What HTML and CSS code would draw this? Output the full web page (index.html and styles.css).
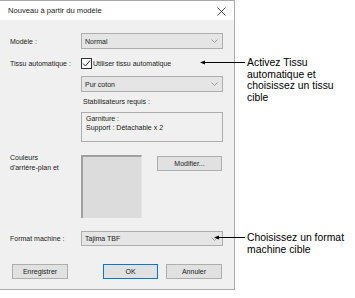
FILE: index.html
```html
<!DOCTYPE html>
<html lang="fr">
<head>
    <meta charset="UTF-8">
    <meta name="viewport" content="width=device-width, initial-scale=1.0">
    <title>Nouveau à partir du modèle</title>
    <link rel="stylesheet" href="styles.css">
</head>
<body>
    <div class="page">
        <div class="dialog">
            <div class="titlebar">
                <span class="title">Nouveau à partir du modèle</span>
                <svg class="close" width="9" height="9" viewBox="0 0 9 9">
                    <path d="M0.5 0.5 L8.5 8.5 M8.5 0.5 L0.5 8.5" stroke="#333" stroke-width="0.9" fill="none"/>
                </svg>
            </div>

            <div class="content">
                <div class="row row-model">
                    <div class="lbl">Modèle :</div>
                    <div class="select">
                        <span>Normal</span>
                        <svg class="chev" width="7" height="4" viewBox="0 0 7 4"><path d="M0.5 0.5 L3.5 3.5 L6.5 0.5" stroke="#999" fill="none"/></svg>
                    </div>
                </div>

                <div class="row row-tissu">
                    <div class="lbl">Tissu automatique :</div>
                    <div class="check">
                        <span class="box">
                            <svg width="9" height="9" viewBox="0 0 9 9"><path d="M1 4.5 L3.5 7 L8 1.5" stroke="#222" stroke-width="1" fill="none"/></svg>
                        </span>
                        <span>Utiliser tissu automatique</span>
                    </div>
                </div>

                <div class="row row-fabric">
                    <div class="lbl"></div>
                    <div class="select">
                        <span>Pur coton</span>
                        <svg class="chev" width="7" height="4" viewBox="0 0 7 4"><path d="M0.5 0.5 L3.5 3.5 L6.5 0.5" stroke="#999" fill="none"/></svg>
                    </div>
                </div>

                <div class="row row-stab">
                    <div class="lbl"></div>
                    <div class="stab">
                        <div class="stab-title">Stabilisateurs requis :</div>
                        <div class="stab-box">
                            <div>Garniture :</div>
                            <div>Support : Détachable x 2</div>
                        </div>
                    </div>
                </div>

                <div class="row row-colors">
                    <div class="lbl lbl-wrap">Couleurs<br>d'arrière-plan et</div>
                    <div class="colors">
                        <div class="swatch"></div>
                        <div class="btn btn-modify">Modifier...</div>
                    </div>
                </div>

                <div class="row row-format">
                    <div class="lbl">Format machine :</div>
                    <div class="select">
                        <span>Tajima TBF</span>
                        <svg class="chev" width="7" height="4" viewBox="0 0 7 4"><path d="M0.5 0.5 L3.5 3.5 L6.5 0.5" stroke="#999" fill="none"/></svg>
                    </div>
                </div>

                <div class="actions">
                    <div class="btn btn-save">Enregistrer</div>
                    <div class="btn btn-ok">OK</div>
                    <div class="btn btn-cancel">Annuler</div>
                </div>
            </div>
        </div>

        <!-- callouts -->
        <div class="callout callout-tissu">
            <svg class="pointer" width="47" height="7" viewBox="0 0 47 7">
                <path d="M1 3.5 L6 1.5 L6 5.5 Z" fill="#000"/>
                <path d="M3 3.5 L46 3.5" stroke="#000" stroke-width="1"/>
            </svg>
            <div class="note">Activez Tissu<br>automatique et<br>choisissez un tissu<br>cible</div>
        </div>

        <div class="callout callout-format">
            <svg class="pointer" width="33" height="7" viewBox="0 0 33 7">
                <path d="M1 3.5 L6 1.5 L6 5.5 Z" fill="#000"/>
                <path d="M3 3.5 L32 3.5" stroke="#000" stroke-width="1"/>
            </svg>
            <div class="note">Choisissez un format<br>machine cible</div>
        </div>
    </div>
</body>
</html>
```

FILE: styles.css
```css
body {
    margin: 0;
    background-color: #fff;
    font-family: "Liberation Sans", Arial, sans-serif;
}
.page {
    position: relative;
    width: 355px;
    height: 298px;
}
.dialog {
    width: 235px;
    height: 290px;
    box-sizing: border-box;
    border: 1px solid #aaa;
    border-left: none;
    background-color: #f0f0f0;
    font-size: 7px;
    color: #1a1a1a;
}
.titlebar {
    height: 19px;
    background-color: #fff;
    display: flex;
    align-items: center;
    justify-content: space-between;
    padding: 0 8px 0 8px;
}
.title {
    font-size: 7.6px;
    color: #222;
}
.close {
    margin-top: 1px;
}
.content {
    padding: 13px 12px 0 10px;
}
.row {
    display: grid;
    grid-template-columns: 71px 142px;
    align-items: center;
}
.lbl {
    white-space: nowrap;
}
.select {
    height: 16px;
    box-sizing: border-box;
    border: 1px solid #adadad;
    background-color: #e5e5e5;
    display: flex;
    align-items: center;
    justify-content: space-between;
    padding: 0 4px 0 3px;
}
.row-tissu {
    margin-top: 8px;
    height: 12px;
}
.check {
    display: flex;
    align-items: center;
}
.box {
    width: 9px;
    height: 9px;
    border: 1px solid #333;
    background-color: #fff;
    margin-right: 1px;
    display: flex;
}
.row-fabric {
    margin-top: 7px;
}
.row-stab {
    margin-top: 5px;
}
.stab-title {
    line-height: 10px;
    padding-left: 2px;
}
.stab-box {
    margin-top: 5px;
    height: 30px;
    box-sizing: border-box;
    border: 1px solid #adadad;
    padding: 1px 4px;
    line-height: 9px;
}
.row-colors {
    margin-top: 13px;
    align-items: start;
}
.lbl-wrap {
    line-height: 10px;
    margin-top: -2px;
}
.colors {
    display: flex;
    align-items: flex-start;
}
.swatch {
    width: 61px;
    height: 63px;
    box-sizing: border-box;
    background-color: #dcdcdc;
    border-top: 2px solid #a0a0a0;
    border-left: 2px solid #a0a0a0;
    border-right: 1px solid #e6e6e6;
}
.btn {
    height: 15px;
    box-sizing: border-box;
    border: 1px solid #adadad;
    background-color: #e1e1e1;
    display: flex;
    align-items: center;
    justify-content: center;
}
.btn-modify {
    width: 65px;
    margin-left: 15px;
    margin-top: 1px;
}
.row-format {
    margin-top: 13px;
}
.row-format .select {
    height: 15px;
}
.actions {
    margin-top: 18px;
    display: flex;
    padding-left: 2px;
}
.btn-save {
    width: 56px;
}
.btn-ok {
    width: 55px;
    margin-left: 35px;
    border-color: #0078d7;
}
.btn-cancel {
    width: 56px;
    margin-left: 8px;
}
.callout {
    position: absolute;
    display: flex;
    align-items: flex-start;
}
.callout-tissu {
    left: 199px;
    top: 57px;
}
.callout-format {
    left: 213px;
    top: 232px;
}
.pointer {
    margin-top: 2px;
}
.note {
    font-family: "Liberation Sans", Arial, sans-serif;
    font-size: 10.4px;
    line-height: 11.7px;
    color: #000;
    margin-left: 1px;
}
```
